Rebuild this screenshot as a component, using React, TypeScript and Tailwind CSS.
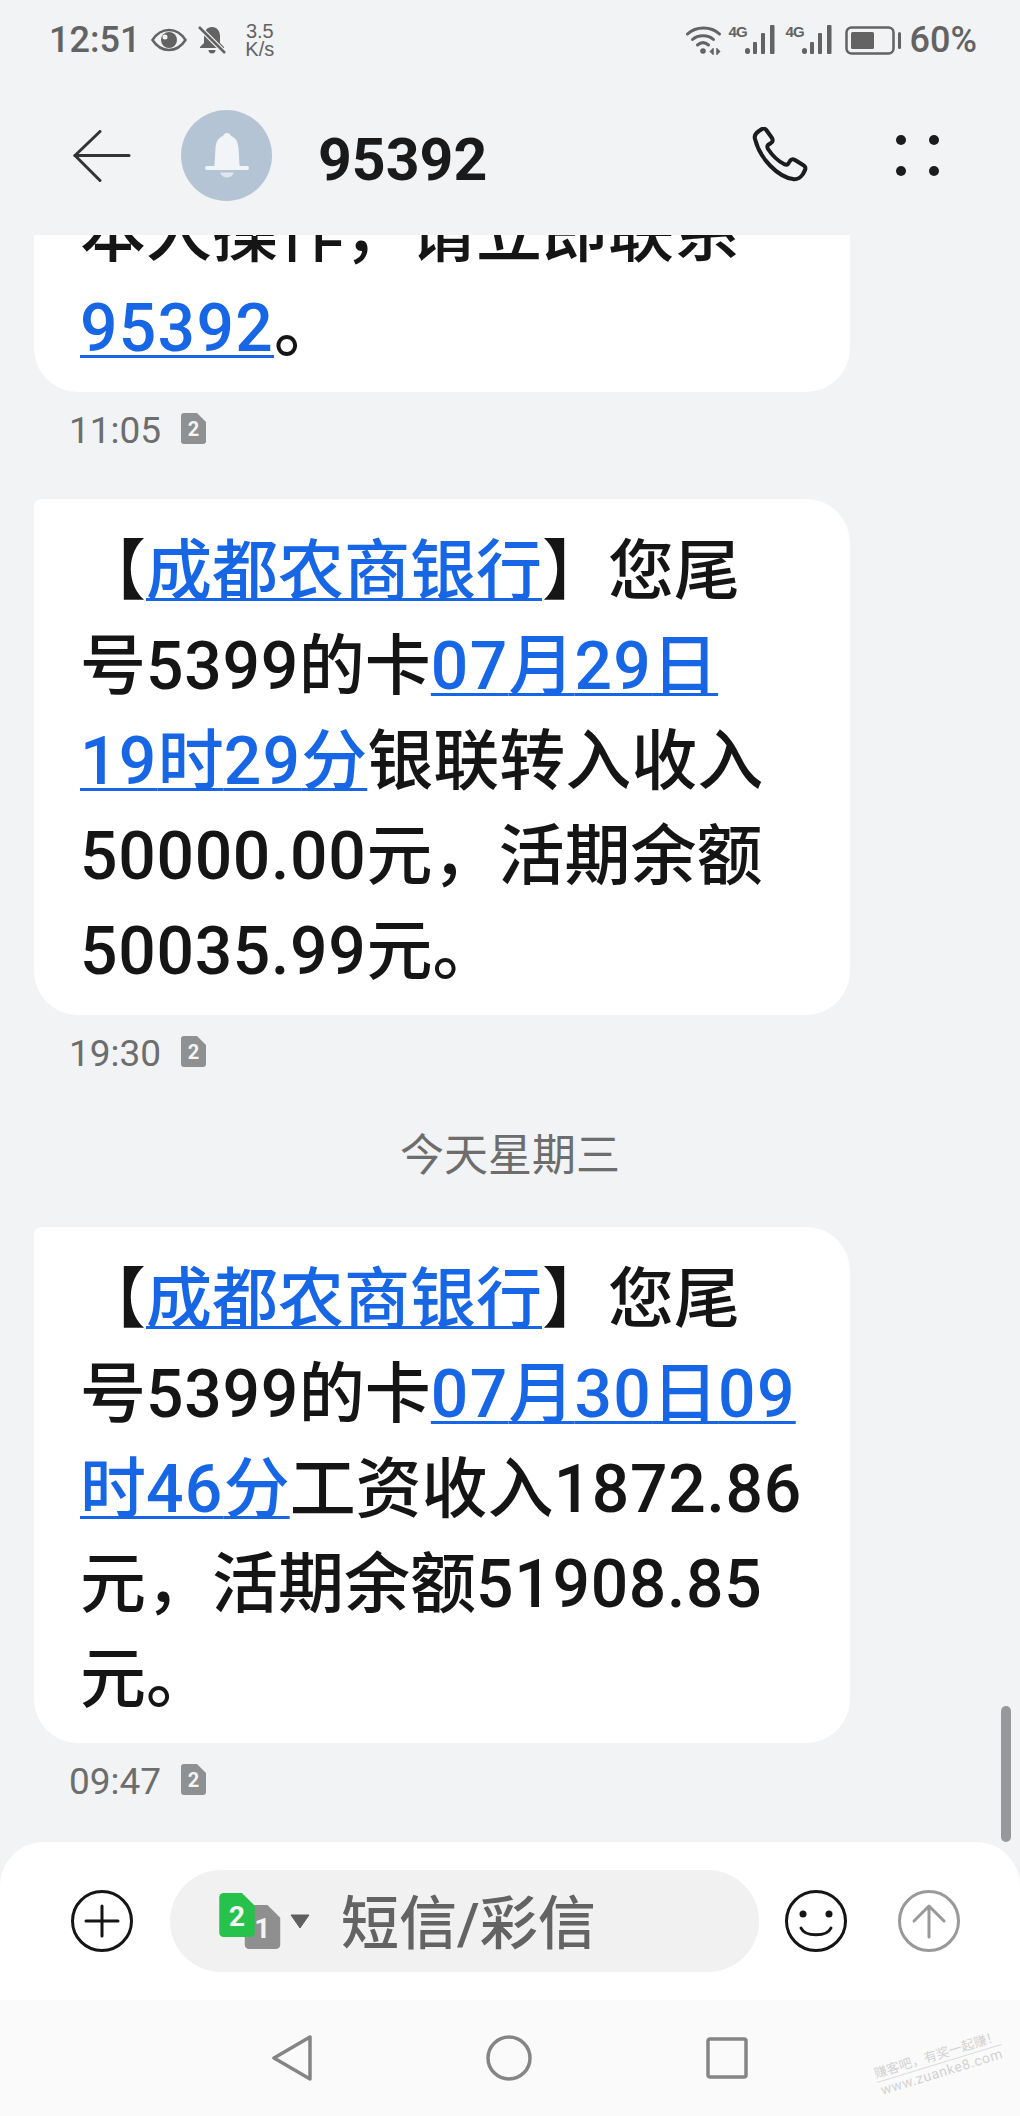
import React from "react";

const FONT = "font-['Roboto','Noto_Sans_CJK_SC',sans-serif]";

function fmt(text: string, tracking = "tracking-[0.7px]") {
  return text.split(/([\d.]+)/).map((part, i) =>
    i % 2 === 1 ? (
      <span key={i} className={tracking}>{part}</span>
    ) : (
      <span key={i}>{part}</span>
    )
  );
}

function L({ children }: { children: string }) {
  return <span className="text-[#1766e6] underline decoration-[3px] underline-offset-[4px] [text-decoration-skip-ink:none]">{fmt(children, "tracking-[1.3px]")}</span>;
}

function Bubble({ lines }: { lines: React.ReactNode[] }) {
  return (
    <div className="w-[816px] rounded-[44px] rounded-tl-[8px] bg-white pl-[46px] pt-[25px] pb-[16px] text-[66px] leading-[95px] font-medium text-[#151515] whitespace-nowrap">
      {lines.map((l, i) => (
        <div key={i} className="h-[95px]">{l}</div>
      ))}
    </div>
  );
}

function Sim({ n, fill, className }: { n: string; fill: string; className?: string }) {
  return (
    <svg viewBox="0 0 25 31" className={className}>
      <path d="M3 0H16L25 9V28a3 3 0 0 1-3 3H3a3 3 0 0 1-3-3V3a3 3 0 0 1 3-3Z" fill={fill} />
      <text x="12.5" y="23" textAnchor="middle" fontSize="20" fontWeight="700" fill="#f4f4f4" fontFamily="Roboto, sans-serif">{n}</text>
    </svg>
  );
}

function Stamp({ time }: { time: string }) {
  return (
    <div className="mt-[19px] ml-[35px] flex h-[40px] items-center gap-[20px] text-[37px] leading-[40px] text-[#6d6d6d]">
      <span>{time}</span>
      <Sim n="2" fill="#8f9092" className="h-[31px] w-[25px] -translate-y-[3px]" />
    </div>
  );
}

function Signal() {
  return (
    <div className="flex items-start">
      <span className="w-[16px] text-[15px] leading-[14px] font-bold tracking-[-1px] text-[#636363] font-['Liberation_Sans',sans-serif]">4G</span>
      <svg viewBox="0 0 31 30" className="h-[30px] w-[31px]" fill="#636363">
        <rect x="0" y="23" width="5" height="6" rx="2.5" />
        <rect x="8" y="17" width="4" height="12" rx="1" />
        <rect x="16" y="8" width="4" height="21" rx="1" />
        <rect x="25" y="0" width="4.5" height="29" rx="1" />
      </svg>
    </div>
  );
}

export default function App() {
  return (
    <div className={`relative flex h-[2116px] w-[1020px] flex-col overflow-hidden bg-[#f1f3f5] ${FONT}`}>
      {/* status bar */}
      <div className="z-10 flex h-[80px] items-center justify-between bg-[#f1f3f5] pl-[49px] pr-[43px] text-[#636363]">
        <div className="flex items-center">
          <span className="text-[36px] leading-[40px] font-medium">12:51</span>
          <svg viewBox="0 0 36 24" className="ml-[11px] h-[24px] w-[36px]">
            <path d="M1.5 12C6 5 11 2 18 2s12 3 16.500 10C30 19 25 22 18 22S6 19 1.500 12Z" fill="none" stroke="#636363" strokeWidth="2.500" />
            <circle cx="18" cy="12" r="8" fill="#636363" />
            <circle cx="14" cy="9" r="2.500" fill="#f1f3f5" />
          </svg>
          <svg viewBox="0 0 28 30" className="ml-[11px] h-[30px] w-[28px]">
            <path d="M14 2c-5 0-8 4-8 9v7l-4 4v1h24v-1l-4-4v-7c0-5-3-9-8-9Z" fill="#636363" />
            <path d="M10.500 25h7a3.500 3.500 0 0 1-7 0Z" fill="#636363" />
            <path d="M1 2l26 26" stroke="#f1f3f5" strokeWidth="5" />
            <path d="M1 2l26 26" stroke="#636363" strokeWidth="2.500" />
          </svg>
          <div className="ml-[19px] flex flex-col items-center text-[20px] leading-[18px] font-['Liberation_Sans',sans-serif]">
            <span>3.5</span>
            <span>K/s</span>
          </div>
        </div>
        <div className="flex items-center">
          <svg viewBox="0 0 36 30" className="h-[30px] w-[36px]" fill="none" stroke="#636363" strokeLinecap="round">
            <path d="M1.500 9C10 1 25 1 33.500 9" strokeWidth="3" />
            <path d="M6.500 14.500C12 9.500 22 9.500 27.500 14.500" strokeWidth="3" />
            <path d="M11.500 20C15 17 19 17 22.500 20" strokeWidth="3" />
            <circle cx="17" cy="26" r="2.800" fill="#636363" stroke="none" />
            <path d="M27 23.500l-3 3 3 3ZM31 23.500l3 3-3 3Z" fill="#636363" stroke="#636363" strokeWidth="1" />
          </svg>
          <div className="ml-[7px] flex items-center gap-[10px]">
            <Signal />
            <Signal />
          </div>
          <svg viewBox="0 0 56 29" className="ml-[12px] h-[29px] w-[56px]" fill="none">
            <rect x="1.500" y="1.500" width="47" height="26" rx="5" stroke="#636363" strokeWidth="2.500" />
            <rect x="6" y="6" width="23" height="17" rx="1.500" fill="#636363" />
            <rect x="53" y="6" width="3" height="17" rx="1.500" fill="#636363" />
          </svg>
          <span className="ml-[9px] text-[36px] leading-[40px] font-medium">60%</span>
        </div>
      </div>

      {/* header */}
      <div className="z-10 flex h-[155px] items-center bg-[#f1f3f5] pl-[73px] pb-[4px]">
        <svg viewBox="0 0 58 52" className="h-[52px] w-[58px]" fill="none" stroke="#333" strokeWidth="3" strokeLinecap="round" strokeLinejoin="round">
          <path d="M27 1.500L2 25.500L27 50.500" />
          <path d="M2 25.500H56" />
        </svg>
        <div className="ml-[50px] flex h-[91px] w-[91px] items-center justify-center rounded-full bg-[#b4c4d4]">
          <svg viewBox="0 0 44 45" className="h-[45px] w-[44px]">
            <path d="M22 0c2 0 3 1 4 3 5 2 7 6 7.500 12l1 17c.2 2 .5 2.500 1 3H8.500c.5-.5.8-1 1-3l1-17C11 9 13 5 18 3c1-2 2-3 4-3Z" fill="#f2f5f8" />
            <rect x="0" y="33" width="44" height="4" rx="2" fill="#f2f5f8" />
            <path d="M15 39.500h14c-1 3-4 5-7 5s-6-2-7-5Z" fill="#dfe6ee" />
          </svg>
        </div>
        <span className="ml-[46px] mt-[8px] text-[59px] leading-[70px] font-bold text-[#1a1a1a]">95392</span>
        <svg viewBox="0 0 58 57" className="ml-auto h-[57px] w-[58px]" fill="none" stroke="#1c1c1c" strokeWidth="4" strokeLinejoin="round">
          <path d="M3 12c-1-3 1-6 4-8l3-2c2-1 4 0 5 2l5 7c1 2 1 4-1 5l-3 2c-1 1-1 2 0 4 4 6 10 12 16 15 2 1 3 1 4 0l2-3c1-2 3-2 5-1l8 5c2 1 3 3 2 5l-2 4c-2 3-6 6-10 5C26 50 8 32 3 12Z" />
        </svg>
        <div className="ml-[86px] mr-[81px] grid grid-cols-2 gap-x-[23px] gap-y-[21px]">
          <span className="h-[10px] w-[10px] rounded-full bg-[#1c1c1c]" />
          <span className="h-[10px] w-[10px] rounded-full bg-[#1c1c1c]" />
          <span className="h-[10px] w-[10px] rounded-full bg-[#1c1c1c]" />
          <span className="h-[10px] w-[10px] rounded-full bg-[#1c1c1c]" />
        </div>
      </div>

      {/* messages */}
      <div className="flex min-h-0 flex-1 flex-col justify-end overflow-hidden pl-[34px] pb-[40px]">
        <Bubble lines={["本人操作，请立即联系", <><L>95392</L>。</>]} />
        <Stamp time="11:05" />
        <div className="mt-[48px]">
          <Bubble
            lines={[
              <>【<L>成都农商银行</L>】您尾</>,
              <>{fmt("号5399的卡")}<L>07月29日</L></>,
              <><L>19时29分</L>银联转入收入</>,
              <>{fmt("50000.00元，活期余额")}</>,
              <>{fmt("50035.99元。")}</>,
            ]}
          />
        </div>
        <Stamp time="19:30" />
        <div className="mt-[54px] mb-[43px] w-[952px] text-center text-[44px] leading-[56px] text-[#6d6d6d]">今天星期三</div>
        <Bubble
          lines={[
            <>【<L>成都农商银行</L>】您尾</>,
            <>{fmt("号5399的卡")}<L>07月30日09</L></>,
            <><L>时46分</L>{fmt("工资收入1872.86")}</>,
            <>{fmt("元，活期余额51908.85")}</>,
            <>元。</>,
          ]}
        />
        <Stamp time="09:47" />
      </div>

      {/* scrollbar */}
      <div className="absolute left-[1001px] top-[1706px] h-[136px] w-[10px] rounded-full bg-[#97989b]" />

      {/* input bar */}
      <div className="flex h-[158px] items-center rounded-t-[44px] bg-white pl-[71px]">
        <svg viewBox="0 0 62 62" className="h-[62px] w-[62px]" fill="none" stroke="#151515" strokeLinecap="round">
          <circle cx="31" cy="31" r="29.500" strokeWidth="3" />
          <path d="M31 16V46M15 31H47" strokeWidth="3" />
        </svg>
        <div className="ml-[37px] flex h-[102px] w-[589px] items-center rounded-full bg-[#f1f1f2] pl-[49px]">
          <div className="relative h-[56px] w-[62px] shrink-0">
            <Sim n="1" fill="#8f8f8f" className="absolute left-[25px] top-[12px] h-[44px] w-[37px]" />
            <Sim n="2" fill="#27c24c" className="absolute left-0 top-0 h-[44px] w-[36px]" />
          </div>
          <svg viewBox="0 0 20 15" className="ml-[9px] h-[15px] w-[20px]">
            <path d="M1 1H19L10 14Z" fill="#5f5f5f" stroke="#5f5f5f" strokeLinejoin="round" />
          </svg>
          <span className="ml-[31px] mt-[6px] text-[58px] leading-[70px] font-medium text-[#636363]">短信/彩信</span>
        </div>
        <svg viewBox="0 0 62 62" className="ml-[26px] h-[62px] w-[62px]" fill="none" stroke="#151515" strokeLinecap="round">
          <circle cx="31" cy="31" r="29.500" strokeWidth="3" />
          <circle cx="18" cy="24" r="3.500" fill="#151515" stroke="none" />
          <circle cx="44" cy="24" r="3.500" fill="#151515" stroke="none" />
          <path d="M16 38C20 47 42 47 46 38" strokeWidth="3" />
        </svg>
        <svg viewBox="0 0 62 62" className="ml-[51px] h-[62px] w-[62px]" fill="none" stroke="#999" strokeLinecap="round" strokeLinejoin="round">
          <circle cx="31" cy="31" r="29.500" strokeWidth="3" />
          <path d="M31 47V16M16 31L31 16L46 31" strokeWidth="3" />
        </svg>
      </div>

      {/* navigation bar */}
      <div className="relative flex h-[116px] items-center justify-center gap-[174px] bg-[#fafafa]">
        <svg viewBox="0 0 40 46" className="h-[46px] w-[40px]" fill="none" stroke="#858585" strokeWidth="3.500" strokeLinejoin="round">
          <path d="M38 2V44L2 23Z" />
        </svg>
        <svg viewBox="0 0 46 46" className="h-[46px] w-[46px]" fill="none" stroke="#858585" strokeWidth="3.500">
          <circle cx="23" cy="23" r="21" />
        </svg>
        <svg viewBox="0 0 42 42" className="h-[42px] w-[42px]" fill="none" stroke="#858585" strokeWidth="3.500" strokeLinejoin="round">
          <rect x="2" y="2" width="38" height="38" rx="2" />
        </svg>
        <div className="absolute left-[874px] top-[46px] flex -rotate-[17deg] flex-col items-center whitespace-nowrap text-[#d2d2d2]">
          <span className="border-b border-[#dcdcdc] text-[13px] leading-[17px]">赚客吧，有奖一起赚！</span>
          <span className="text-[14px] leading-[16px] tracking-[0.6px]">www.zuanke8.com</span>
        </div>
      </div>
    </div>
  );
}
